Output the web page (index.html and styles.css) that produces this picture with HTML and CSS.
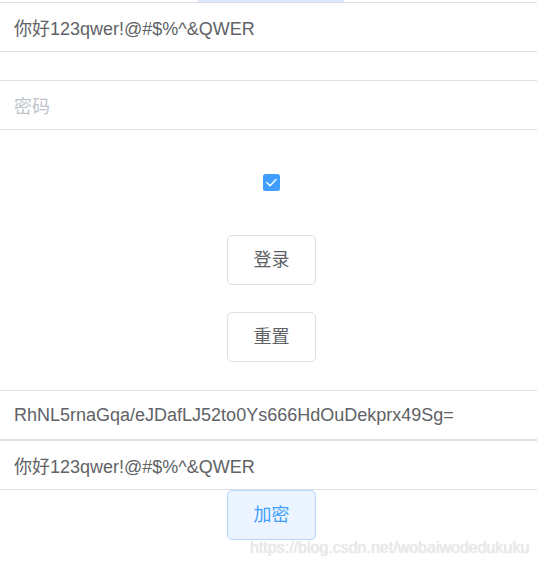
FILE: index.html
```html
<!DOCTYPE html>
<html lang="zh">
<head>
<meta charset="utf-8">
<title>加密</title>
<link rel="stylesheet" href="styles.css">
</head>
<body>
<div class="page">
  <div class="top-stub"></div>
  <div class="field"><span class="value">你好123qwer!@#$%^&amp;QWER</span></div>
  <div class="gap"></div>
  <div class="field"><span class="placeholder">密码</span></div>
  <div class="center">
    <span class="checkbox">
      <svg width="17" height="17" viewBox="0 0 17 17">
        <rect x="0" y="0" width="17" height="17" rx="2.5" fill="#409eff"/>
        <polyline points="3.8,8.6 7,11.8 13,5.6" fill="none" stroke="#ffffff" stroke-width="1.4" stroke-linecap="round" stroke-linejoin="round"/>
      </svg>
    </span>
    <button class="btn btn-login">登录</button>
    <button class="btn btn-reset">重置</button>
  </div>
  <div class="field field-result"><span class="value">RhNL5rnaGqa/eJDafLJ52to0Ys666HdOuDekprx49Sg=</span></div>
  <div class="field"><span class="value">你好123qwer!@#$%^&amp;QWER</span></div>
  <div class="center">
    <button class="btn btn-primary">加密</button>
  </div>
  <div class="watermark">https://blog.csdn.net/wobaiwodedukuku</div>
</div>
</body>
</html>
```
FILE: styles.css
```css
html, body {
  margin: 0;
  padding: 0;
  background: #ffffff;
}
body {
  font-family: "Liberation Sans", "Noto Sans CJK SC", sans-serif;
  font-size: 18px;
  color: #606266;
}
.page {
  position: relative;
  width: 537px;
  height: 565px;
  overflow: hidden;
}
.top-stub {
  width: 146px;
  height: 2px;
  margin-left: 198px;
  background: #dbeafb;
}
.field {
  box-sizing: border-box;
  height: 50px;
  border-top: 1px solid #dcdfe6;
  border-bottom: 1px solid #dcdfe6;
  display: flex;
  align-items: center;
  padding-left: 14px;
  white-space: nowrap;
}
.field .value {
  color: #606266;
}
.field .placeholder {
  color: #c0c4cc;
}
.gap {
  height: 28px;
}
.center {
  display: flex;
  flex-direction: column;
  align-items: center;
  padding-left: 6px;
}
.checkbox {
  display: block;
  width: 17px;
  height: 17px;
  margin-top: 44px;
}
.checkbox svg {
  display: block;
}
.btn {
  box-sizing: border-box;
  width: 89px;
  height: 50px;
  border: 1px solid #dcdfe6;
  border-radius: 5px;
  background: #ffffff;
  color: #606266;
  font-family: "Liberation Sans", "Noto Sans CJK SC", sans-serif;
  font-size: 18px;
  padding: 0;
  line-height: 1;
}
.btn-login {
  margin-top: 44px;
}
.btn-reset {
  margin-top: 27px;
}
.field-result {
  margin-top: 28px;
}
.btn-primary {
  background: #ecf5ff;
  border-color: #b3d8ff;
  color: #409eff;
}
.watermark {
  position: absolute;
  left: 250px;
  top: 539px;
  font-size: 16px;
  color: #ececec;
  text-shadow: 0 0 1px #d0d0d0;
  white-space: nowrap;
}
```
